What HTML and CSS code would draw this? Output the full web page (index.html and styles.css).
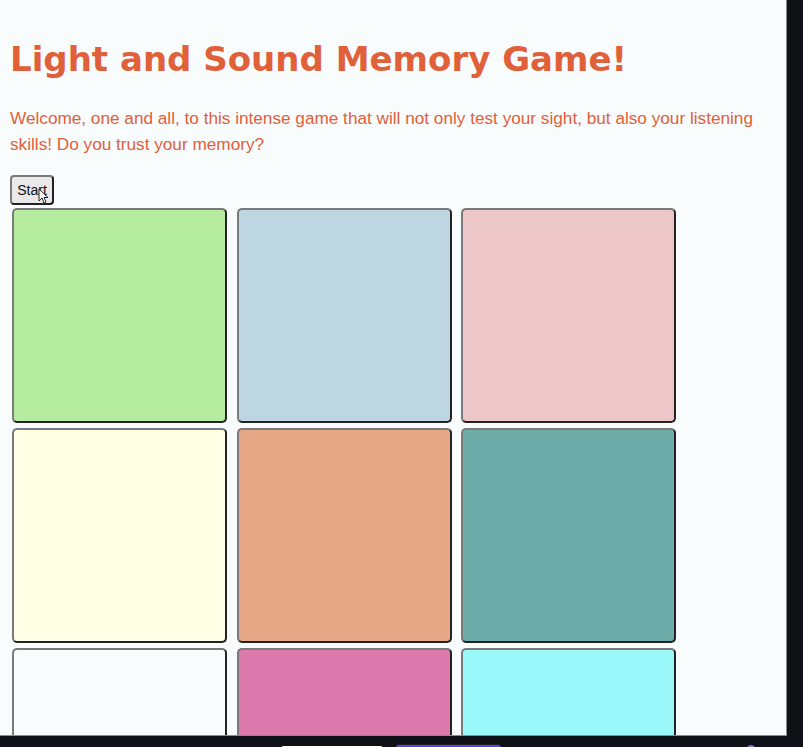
FILE: index.html
```html
<!DOCTYPE html>
<html>
<head>
<meta charset="utf-8">
<title>Light and Sound Memory Game</title>
<link rel="stylesheet" href="styles.css">
</head>
<body>
<div class="frame">
  <div class="viewport">
    <h1 class="title">Light and Sound Memory Game!</h1>
    <p class="intro">Welcome, one and all, to this intense game that will not only test your sight, but also your listening skills! Do you trust your memory?</p>
    <div class="controls">
      <button class="start-btn">Start</button>
      <svg class="cursor" width="11" height="16" viewBox="0 0 11 16"><path d="M1 1 L1 13 L4 10 L6 15 L8 14 L6 9.5 L10 9.5 Z" fill="#fff" stroke="#222" stroke-width="1" stroke-linejoin="round"/></svg>
    </div>
    <div class="game-area">
      <button class="tile tile-green"></button>
      <button class="tile tile-blue"></button>
      <button class="tile tile-pink"></button>
      <button class="tile tile-yellow"></button>
      <button class="tile tile-orange"></button>
      <button class="tile tile-teal"></button>
      <button class="tile tile-white"></button>
      <button class="tile tile-magenta"></button>
      <button class="tile tile-cyan"></button>
    </div>
  </div>
  <div class="strip">
    <div class="strip-white"></div>
    <div class="strip-purple"></div>
    <div class="strip-dot"></div>
  </div>
</div>
</body>
</html>
```

FILE: styles.css
```css
html, body {
  margin: 0;
  padding: 0;
}
body {
  width: 803px;
  height: 747px;
  overflow: hidden;
  background: #0e1116;
}
.frame {
  display: flex;
  flex-direction: column;
}
.viewport {
  height: 735px;
  background: #f8fcfd;
  border-right: 1px solid #8c8c8c;
  border-bottom: 1px solid #8c8c8c;
  overflow: hidden;
  padding: 0 10px;
  box-sizing: content-box;
  width: 766px;
}
.title {
  font-family: "DejaVu Sans", Verdana, sans-serif;
  font-weight: bold;
  font-size: 34px;
  color: #e0603a;
  margin: 38px 0 0 0;
  line-height: 42px;
}
.intro {
  font-family: "Liberation Sans", Arial, sans-serif;
  font-size: 17.2px;
  line-height: 26px;
  color: #e0603a;
  margin: 25px 0 0 0;
}
.controls {
  position: relative;
  margin-top: 18px;
  height: 30px;
}
.start-btn {
  font-family: "Liberation Sans", Arial, sans-serif;
  font-size: 14px;
  color: #111;
  background: #e9e9e9;
  border: 2px solid;
  border-color: #7a7a7a #222 #222 #7a7a7a;
  border-radius: 4px;
  height: 30px;
  width: 44px;
  padding: 0;
  display: block;
}
.cursor {
  position: absolute;
  left: 28px;
  top: 13px;
}
.game-area {
  display: grid;
  grid-template-columns: repeat(3, 215px);
  grid-auto-rows: 215px;
  column-gap: 9.5px;
  row-gap: 5px;
  margin-top: 3px;
  padding-left: 2px;
}
.tile {
  border: 2px solid;
  border-color: #7a7a7a #222 #222 #7a7a7a;
  border-radius: 5px;
  padding: 0;
  margin: 0;
}
.tile-green { background: #b6eca0; }
.tile-blue { background: #bed5e2; }
.tile-pink { background: #edc6ca; }
.tile-yellow { background: #ffffe6; }
.tile-orange { background: #e6a887; }
.tile-teal { background: #6eaca9; }
.tile-white { background: #f8fcfd; }
.tile-magenta { background: #de79ae; }
.tile-cyan { background: #9af7fa; }
.strip {
  display: flex;
  height: 11px;
  padding: 8px 0 0 279px;
  box-sizing: border-box;
  overflow: hidden;
}
.strip-white {
  width: 102px;
  height: 10px;
  background: #fff;
  border: 2px solid #111;
  border-radius: 5px 5px 0 0;
}
.strip-purple {
  width: 105px;
  height: 10px;
  background: #5a45e0;
  border: 1px solid #222;
  border-radius: 4px 4px 0 0;
  margin-left: 10px;
}
.strip-dot {
  width: 10px;
  height: 10px;
  border-radius: 50%;
  background: #7b6fd0;
  margin-left: 244px;
  margin-top: 1px;
}
```
